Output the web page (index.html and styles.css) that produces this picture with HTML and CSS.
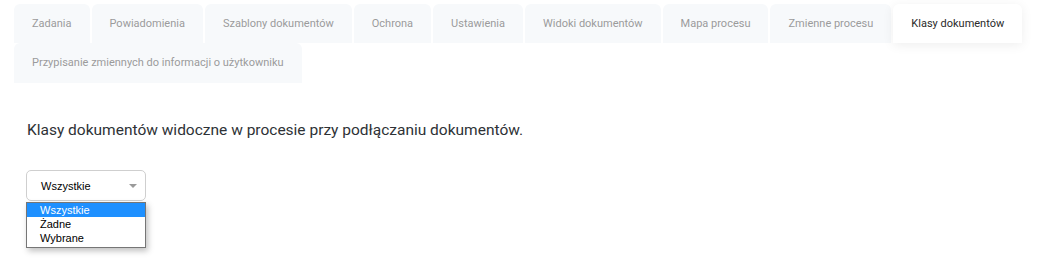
FILE: index.html
```html
<!DOCTYPE html>
<html lang="pl">
<head>
<meta charset="utf-8">
<title>Klasy dokumentów</title>
<link rel="stylesheet" href="styles.css">
</head>
<body>
<div class="page">
  <nav class="tabs">
    <div class="tab">Zadania</div>
    <div class="tab">Powiadomienia</div>
    <div class="tab">Szablony dokumentów</div>
    <div class="tab">Ochrona</div>
    <div class="tab">Ustawienia</div>
    <div class="tab">Widoki dokumentów</div>
    <div class="tab">Mapa procesu</div>
    <div class="tab">Zmienne procesu</div>
    <div class="tab active">Klasy dokumentów</div>
    <div class="tab">Przypisanie zmiennych do informacji o użytkowniku</div>
  </nav>
  <section class="content">
    <h2 class="title">Klasy dokumentów widoczne w procesie przy podłączaniu dokumentów.</h2>
    <div class="select-wrap">
      <div class="select">
        <span class="select-value">Wszystkie</span>
        <span class="caret"></span>
      </div>
      <ul class="options">
        <li class="option selected">Wszystkie</li>
        <li class="option">Żadne</li>
        <li class="option">Wybrane</li>
      </ul>
    </div>
  </section>
</div>
</body>
</html>
```
FILE: styles.css
```css
html, body {
  margin: 0;
  padding: 0;
  background: #ffffff;
}
.page {
  font-family: Roboto, "Noto Sans", sans-serif;
  color: #333;
  min-height: 268px;
}
.tabs {
  display: flex;
  flex-wrap: wrap;
  column-gap: 2px;
  padding: 4px 14px 0 14px;
}
.tab {
  height: 39px;
  line-height: 39px;
  padding: 0 18px;
  font-size: 11px;
  color: #9b9b9b;
  background: #f7f9fb;
  border-radius: 6px 6px 0 0;
  white-space: nowrap;
}
.tab.active {
  background: #ffffff;
  color: #2a2a2a;
  box-shadow: 0 2px 12px rgba(0, 0, 0, 0.07);
}
.tabs .tab:last-child {
  height: 40px;
  line-height: 40px;
}
.content {
  padding: 37px 26px 0 27px;
}
.title {
  margin: 0;
  font-size: 15.5px;
  font-weight: 400;
  line-height: 20px;
  color: #2e3236;
}
.select-wrap {
  position: relative;
  margin-top: 30px;
  margin-left: -1px;
  width: 120px;
}
.select {
  box-sizing: border-box;
  height: 31px;
  width: 120px;
  border: 1px solid #cfcfcf;
  border-radius: 5px;
  display: flex;
  align-items: center;
  justify-content: space-between;
  padding: 0 8px 0 14px;
  font-family: "Liberation Sans", Arial, sans-serif;
  font-size: 11px;
  color: #000;
  background: #fff;
}
.caret {
  width: 0;
  height: 0;
  border-left: 4px solid transparent;
  border-right: 4px solid transparent;
  border-top: 4px solid #9a9a9a;
}
.options {
  position: absolute;
  top: 32px;
  left: 0;
  width: 120px;
  box-sizing: border-box;
  margin: 0;
  padding: 0 0 2px 0;
  list-style: none;
  border: 1px solid #767676;
  background: #fff;
  box-shadow: 2px 3px 6px rgba(0, 0, 0, 0.25);
  font-family: "Liberation Sans", Arial, sans-serif;
  font-size: 11px;
  color: #000;
}
.option {
  height: 14px;
  line-height: 14px;
  padding-left: 13px;
}
.option.selected {
  background: #1e90ff;
  color: #fff;
}
```
